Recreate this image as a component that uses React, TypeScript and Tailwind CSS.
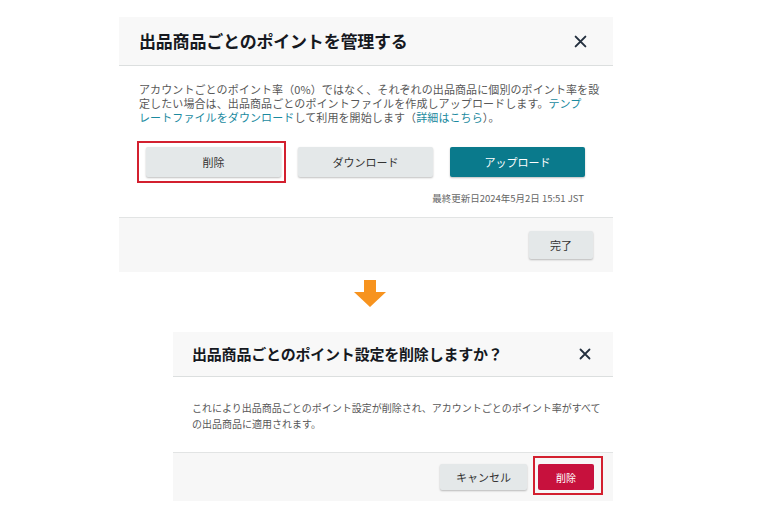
import React from 'react';

const CloseIcon = ({ size = 13 }: { size?: number }) => (
  <svg width={size} height={size} viewBox="0 0 12 12" className="text-[#232f3e]">
    <path d="M1.5 1.5 L10.5 10.5 M10.5 1.5 L1.5 10.5" stroke="currentColor" strokeWidth="1.8" strokeLinecap="round" />
  </svg>
);

const GrayButton = ({ children, className = '' }: { children: React.ReactNode; className?: string }) => (
  <button
    className={`flex items-center justify-center rounded-[2px] bg-[#e4e8e9] text-[11px] text-[#333] shadow-[0_1px_2px_rgba(0,0,0,0.25)] ${className}`}
  >
    {children}
  </button>
);

// red annotation box drawn around a button
const Highlight = ({ children, className }: { children: React.ReactNode; className: string }) => (
  <div className="relative">
    {children}
    <span className={`pointer-events-none absolute border-2 border-[#d3202f] ${className}`} />
  </div>
);

const ManageDialog = () => (
  <div className="w-[494px] bg-white">
    <div className="flex h-[49px] items-center justify-between border-b border-[#dcdfdf] bg-[#f8f8f8] pl-[20px] pr-[26px]">
      <h1 className="text-[17px] font-bold tracking-[-0.2px] text-[#16191f]">出品商品ごとのポイントを管理する</h1>
      <CloseIcon />
    </div>
    <div className="px-[20px] pt-[16px] pb-[12px]">
      <p className="whitespace-nowrap text-[11px] leading-[14px] tracking-[0.1px] text-[#585858]">
        アカウントごとのポイント率（0%）ではなく、それぞれの出品商品に個別のポイント率を設
        <br />
        定したい場合は、出品商品ごとのポイントファイルを作成しアップロードします。
        <span className="text-[#1b8aa0]">テンプ</span>
        <br />
        <span className="text-[#1b8aa0]">レートファイルをダウンロード</span>
        して利用を開始します（<span className="text-[#1b8aa0]">詳細はこちら</span>）。
      </p>
      <div className="mt-[23px] flex gap-[17px] pl-[7px]">
        <Highlight className="-top-[6px] -bottom-[6px] -left-[9px] -right-[5px]">
          <GrayButton className="h-[30px] w-[135px]">削除</GrayButton>
        </Highlight>
        <GrayButton className="h-[30px] w-[135px]">ダウンロード</GrayButton>
        <button className="flex h-[30px] w-[135px] items-center justify-center rounded-[2px] bg-[#0a7a8c] text-[11px] text-white shadow-[0_1px_2px_rgba(0,0,0,0.25)]">
          アップロード
        </button>
      </div>
      <p className="mt-[14px] pr-[9px] text-right text-[9.5px] text-[#666]">最終更新日2024年5月2日 15:51 JST</p>
    </div>
    <div className="flex h-[55px] items-center justify-end border-t border-[#e2e4e4] bg-[#f7f7f7] pr-[20px]">
      <GrayButton className="h-[28px] w-[64px]">完了</GrayButton>
    </div>
  </div>
);

const ConfirmDialog = () => (
  <div className="w-[440px] bg-white">
    <div className="flex h-[45px] items-center justify-between border-b border-[#dcdfdf] bg-[#f8f8f8] pl-[19px] pr-[22px]">
      <h2 className="text-[15px] font-bold tracking-[-0.2px] text-[#16191f]">出品商品ごとのポイント設定を削除しますか？</h2>
      <CloseIcon size={12} />
    </div>
    <p className="pl-[19px] pr-[12px] pt-[23px] pb-[20px] text-[10px] leading-[16px] text-[#585858]">
      これにより出品商品ごとのポイント設定が削除され、アカウントごとのポイント率がすべての出品商品に適用されます。
    </p>
    <div className="flex h-[49px] items-center justify-end gap-[11px] border-t border-[#e2e4e4] bg-[#f7f7f7] pr-[19px]">
      <GrayButton className="h-[26px] w-[87px]">キャンセル</GrayButton>
      <Highlight className="-top-[8px] -bottom-[5px] -left-[5px] -right-[9px]">
        <button className="flex h-[26px] w-[56px] items-center justify-center rounded-[2px] bg-[#c7113d] text-[10px] text-white">
          削除
        </button>
      </Highlight>
    </div>
  </div>
);

const DownArrow = () => (
  <svg width="32" height="27" viewBox="0 0 32 27" className="ml-[7px] self-center">
    <path d="M10 0 H22 V12 H32 L16 27 L0 12 H10 Z" fill="#f7931e" />
  </svg>
);

export default function App() {
  return (
    <main className="min-h-[517px] w-[760px] bg-white font-['Noto_Sans_CJK_JP','Noto_Sans',sans-serif]">
      <div className="ml-[119px] flex w-[494px] flex-col items-end pt-[17px]">
        <ManageDialog />
        <div className="mt-[8px] mb-[25px] flex w-full justify-center">
          <DownArrow />
        </div>
        <ConfirmDialog />
      </div>
    </main>
  );
}
